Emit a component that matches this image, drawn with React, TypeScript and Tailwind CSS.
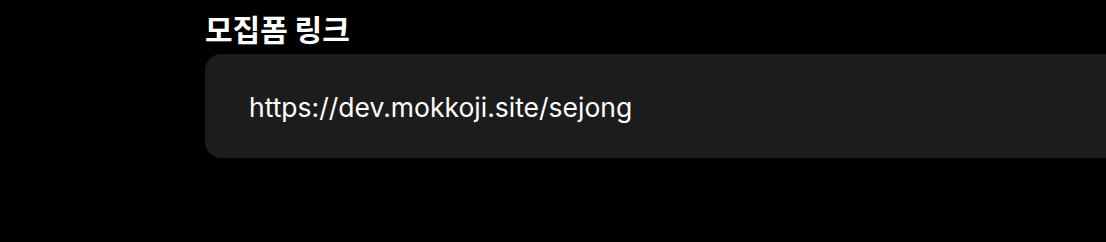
export default function App() {
  return (
    <div className="w-[1106px] h-[242px] bg-black overflow-hidden pl-[205px] pt-[7px]" style={{ fontFamily: 'Inter, "Noto Sans CJK KR", sans-serif' }}>
      <div className="text-white font-bold text-[30px] leading-[42px]" style={{ fontFamily: '"Noto Sans CJK KR", sans-serif' }}>모집폼 링크</div>
      <div className="mt-[5px] w-[1000px] h-[104px] rounded-[16px] bg-[#1c1c1c] flex items-center px-[44px]">
        <span className="text-white text-[26.5px] leading-[32px] pt-[2px]">https://dev.mokkoji.site/sejong</span>
      </div>
    </div>
  );
}
